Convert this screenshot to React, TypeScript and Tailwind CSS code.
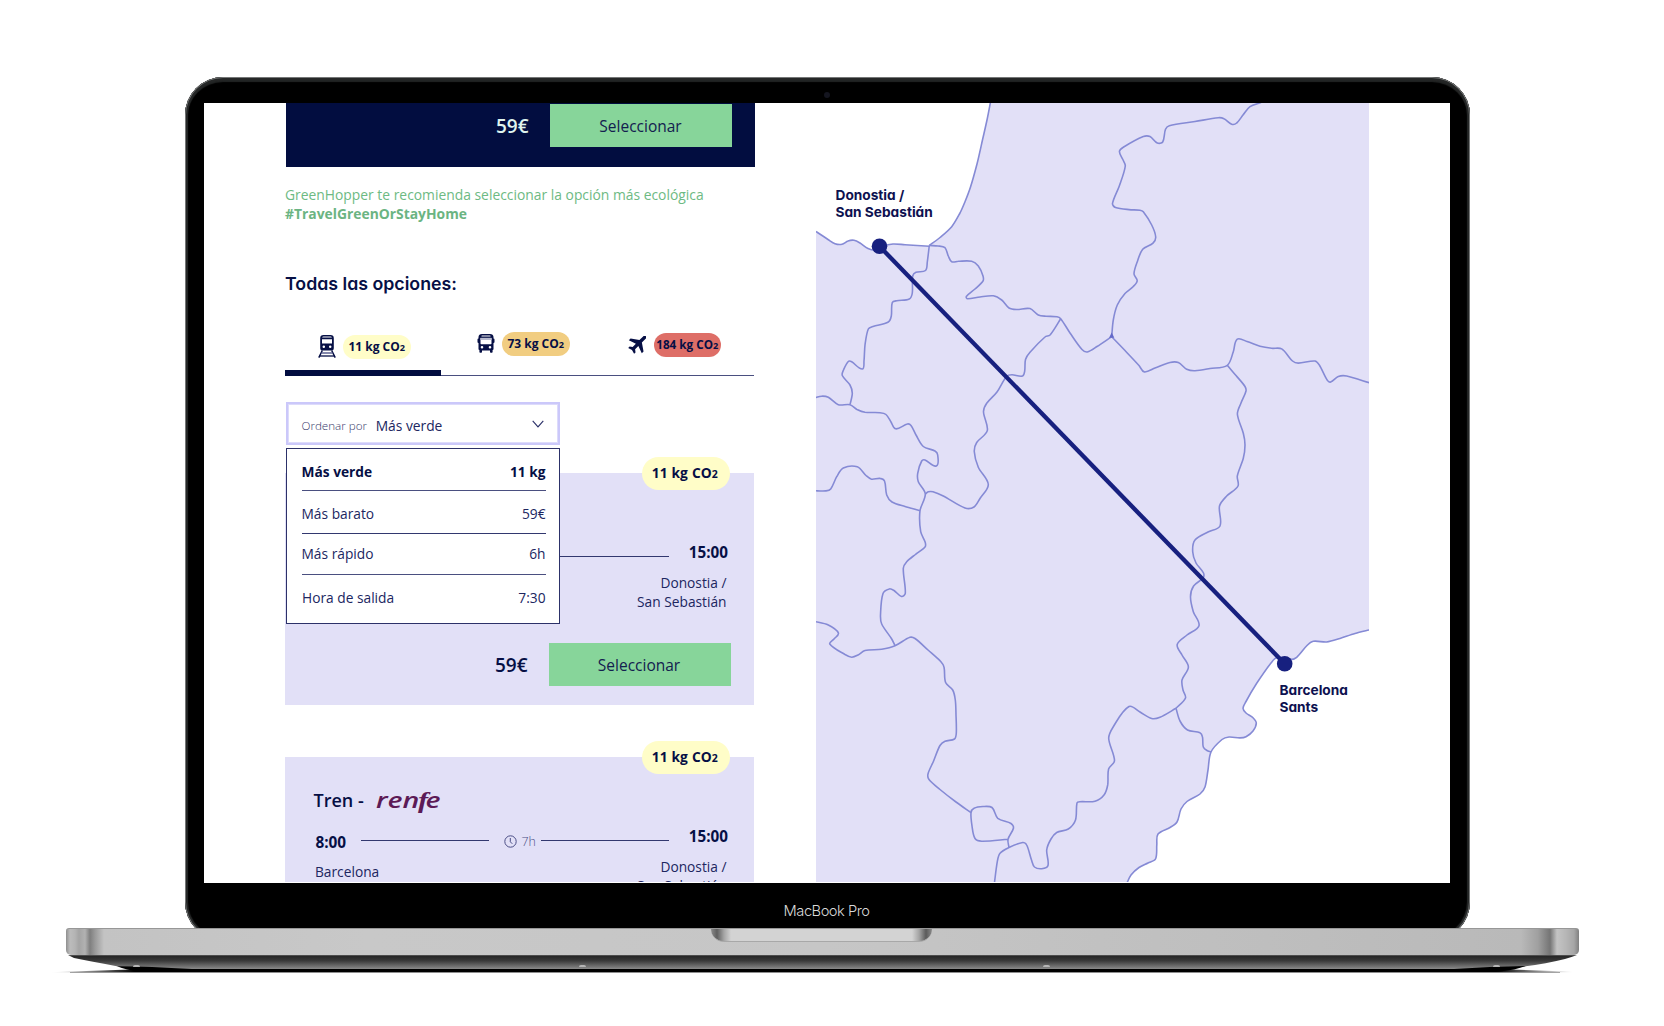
import type { ReactNode } from 'react';

type Point = [number, number];

/* ---------- Map geometry ---------- */

const coastNorth: Point[] = [
  [816, 231.5], [828, 239.5], [835, 243.7], [842, 244.3], [848, 241], [854, 240.3], [860, 243], [868, 248.5],
  [876, 250], [883, 246], [893, 244], [905, 244.7], [929.3, 246.2],
];
const coastBay: Point[] = [
  [929.3, 245.5], [940, 237.5], [951.7, 226.7], [960, 213], [965, 201.7], [970.5, 187], [977, 164], [982.7, 139], [987, 120], [990.7, 101],
];
const coastEast: Point[] = [
  [1372, 629.3], [1355, 633.5], [1340, 638.5], [1326.7, 642], [1313.3, 641.3], [1307, 645.5], [1296.7, 657.3], [1290, 659.6],
  [1277, 657.5], [1271, 663], [1256.7, 683.3], [1246, 701.5], [1243, 708.3], [1246, 713], [1253, 717.7], [1256.3, 723],
  [1253, 731], [1246, 736.7], [1240, 737.9], [1229, 737], [1222, 739.5], [1211, 752], [1208, 770], [1205, 787], [1200, 794],
  [1187, 801.5], [1181, 809], [1177, 822], [1170, 827.5], [1158, 834], [1156.8, 845], [1155.5, 859], [1148, 863], [1139, 867.5],
  [1131, 875], [1126.5, 884],
];

const borders: Point[][] = [
  [[929.3, 245.5], [938, 246], [945, 247.7], [948.3, 256], [951.7, 261.8], [958.3, 261.3], [971.7, 261.3], [978.3, 266], [983, 276], [983, 281], [975, 289], [966.3, 296.5], [967.5, 298.8], [980, 297], [993.3, 295.8], [1001.7, 300], [1009, 308], [1016.7, 309.5], [1030, 308.6], [1038.3, 315], [1046, 316.2], [1057, 316.7], [1060.7, 318.7], [1070, 333], [1082, 349.5], [1087.3, 352], [1097, 346.5], [1111.7, 336.7]],
  [[1111.7, 336.7], [1113.3, 320], [1117.3, 305], [1125, 293.5], [1133.3, 286.5], [1137.2, 280.7], [1134, 274], [1137.3, 261.7], [1142.7, 249.3], [1153, 243.2], [1155.7, 237], [1151.7, 225], [1143.3, 211.7], [1140, 210.2], [1129, 209.6], [1115.5, 207.5], [1112.5, 203.5], [1119.3, 186], [1125.3, 166], [1122.7, 159.3], [1119.4, 151.5], [1123.3, 147.3], [1143.3, 136.6], [1150, 136.6], [1157.3, 143], [1162.7, 142], [1165.5, 129.3], [1169.3, 125.7], [1195, 121.5], [1218.3, 117.7], [1224, 118.7], [1231.7, 124.2], [1236.7, 123], [1243, 115], [1250, 106.7], [1261, 102.5]],
  [[1111.7, 336.7], [1125, 350.5], [1139, 365.5], [1144.3, 371.9], [1155, 368], [1170, 362.5], [1178.3, 362.5], [1186.7, 369.3], [1195, 370.8], [1210, 368.5], [1227.3, 365.3], [1233.3, 351.7], [1237.3, 339.2], [1247, 341.5], [1260, 346.3], [1271.7, 348.3], [1281.7, 348.9], [1292.5, 361], [1298.3, 363.1], [1315, 361], [1319.3, 365], [1327.3, 380.2], [1330.7, 382], [1338.3, 376.5], [1346.7, 376], [1370, 383]],
  [[1227.3, 365.3], [1236, 375.5], [1245, 386.5], [1246, 391], [1241, 403], [1237.4, 414.3], [1243.3, 433.3], [1245, 445], [1243.3, 458.3], [1237.3, 476], [1238, 486], [1226.7, 496], [1219.5, 506], [1220, 526], [1208, 532], [1195, 540], [1192.7, 551.7], [1196, 563], [1203.5, 573], [1203, 578], [1193.6, 586], [1190.5, 596.7], [1193.3, 611.7], [1199, 625.8], [1187, 635], [1177.2, 644.5], [1182, 655], [1188.4, 667], [1182, 680], [1183, 690], [1185.5, 698], [1176, 708.3]],
  [[1176, 708.3], [1160, 717.2], [1151.7, 718.5], [1140, 712], [1129, 706.5], [1113.3, 726.7], [1108.7, 738.3], [1114.5, 760.7], [1108.6, 769], [1107.7, 785], [1104, 795], [1095, 801.2], [1080, 801.7], [1077, 802.8], [1075.5, 820], [1068.3, 829], [1056.7, 832.5], [1051, 839], [1046.7, 850], [1048, 865.5], [1041.7, 868.7], [1034.5, 867], [1031.5, 860], [1026.7, 845], [1022.7, 842.5], [1009, 847.5], [1000, 853.3], [997.3, 861.7], [994.3, 884]],
  [[1009, 847.5], [1008, 839.3], [1013.5, 828], [1011, 823.5], [997.8, 818.3], [992, 807.5], [983, 806.5], [974, 808.3], [971, 812.7], [972, 826], [975, 838.5], [981.7, 841.2], [1008, 839.3]],
  [[971, 812.7], [956, 802], [940, 789.5], [929, 779.5], [928, 774], [933.3, 761.7], [940, 745.5], [945, 741.3], [954.5, 739], [956.3, 733], [956, 715], [955.3, 700], [952.7, 690], [945.6, 682.5], [944, 667], [940.7, 661.5], [928, 650], [915, 638.5], [910, 637.3], [895, 645.7], [881.7, 649.2], [865, 650.5], [858, 655], [851.7, 657.2], [845, 654.5], [829.8, 644], [834, 639], [838.4, 633], [828.3, 625], [814, 621.3]],
  [[895, 645.7], [891.7, 639], [881.7, 624], [880.5, 615], [883, 593.5], [889.3, 588.9], [894, 590.5], [901.5, 596.5], [905.3, 593.3], [903.3, 568.3], [906.7, 561.7], [916, 554], [925, 547], [925.2, 542.3], [920.7, 531.7], [920, 510.7], [925.3, 494], [918.3, 481.7], [917.7, 473.3], [921.7, 461], [925, 460], [936.3, 466], [937.7, 455], [935, 451], [923.3, 446.5], [916, 435], [911, 425.5], [907.3, 424], [895.7, 428.8], [891, 422], [886, 414.5], [880, 412.7], [865, 412.3], [857, 409.5], [850, 404.7], [838.3, 404.7], [828.3, 397.3], [821.7, 396.2], [814, 398]],
  [[850, 404.7], [852.3, 393.3], [850, 385], [842.3, 375.5], [843.5, 370], [848.3, 361.5], [851.7, 361.8], [862.3, 369], [864, 361], [865, 345], [868.3, 329], [873, 326.5], [888.3, 322], [891.3, 316], [892.3, 302.5], [896.7, 300.7], [909.3, 299], [912.3, 293], [912.7, 276], [916, 272.3], [925.5, 270.5], [927.3, 262], [929.3, 245.5]],
  [[920, 510.7], [905, 506.5], [892, 502], [886.7, 495], [884.5, 481], [880, 478.4], [871.5, 479.2], [866, 475.5], [857.3, 466.8], [843.3, 468], [836.7, 476.7], [830.7, 488.9], [826, 490.9], [814, 490.7]],
  [[925.3, 494], [928.3, 491.8], [933, 491.8], [943.3, 496], [965, 508], [974, 507], [980, 498.5], [988.3, 484.5], [978.3, 467.3], [974.3, 451.7], [976.7, 442.5], [987.3, 430.7], [983.5, 411.7], [986.7, 403.3], [997, 392], [1006.7, 376.2], [1012, 374.8], [1022.5, 376], [1024.7, 371], [1025.5, 359.5], [1030, 352.3], [1045, 337], [1050, 335], [1060.7, 318.7]],
  [[1176, 708.3], [1180, 721], [1187.5, 730], [1200, 732.7], [1202.5, 737], [1203.3, 747], [1207, 750.5], [1211, 752]],
];

/** Smooth curve through every point (Catmull-Rom converted to cubic Béziers). */
function curve(points: Point[]): string {
  const k = 0.15;
  let d = '';
  for (let i = 0; i < points.length - 1; i++) {
    const p0 = points[i - 1] ?? points[i];
    const p1 = points[i];
    const p2 = points[i + 1];
    const p3 = points[i + 2] ?? p2;
    const seg = Math.hypot(p2[0] - p1[0], p2[1] - p1[1]);
    const a = Math.hypot(p2[0] - p0[0], p2[1] - p0[1]) || 1;
    const b = Math.hypot(p3[0] - p1[0], p3[1] - p1[1]) || 1;
    const s = seg * k * 2;
    const c1 = [p1[0] + ((p2[0] - p0[0]) / a) * s, p1[1] + ((p2[1] - p0[1]) / a) * s];
    const c2 = [p2[0] - ((p3[0] - p1[0]) / b) * s, p2[1] - ((p3[1] - p1[1]) / b) * s];
    d += `C${c1[0].toFixed(1)} ${c1[1].toFixed(1)} ${c2[0].toFixed(1)} ${c2[1].toFixed(1)} ${p2[0]} ${p2[1]}`;
  }
  return d;
}

const line = (points: Point[]) => `M${points[0][0]} ${points[0][1]}${curve(points)}`;

function RouteMap() {
  return (
    <div className="relative ml-[61px] h-[779px] w-[552.5px] shrink-0 overflow-hidden">
      <svg viewBox="816 103 552.5 779" className="block h-full w-full" fill="none">
        <rect x="816" y="103" width="553" height="780" fill="#e2e0f7" />
        <path d={`${line(coastNorth)}${curve(coastBay)}H816Z`} fill="#fff" />
        <path d={`${line(coastEast)}H1380V629Z`} fill="#fff" />
        <g stroke="#858ad5" strokeWidth="1.600" strokeLinejoin="round">
          {[coastNorth, coastBay, coastEast, ...borders].map((b, i) => (
            <path key={i} d={line(b)} />
          ))}
        </g>
        <path d="M1111.700 332.500l2.600 5.300h-5.200z" fill="#6469c9" />
        <g fill="#17207f">
          <path d="M879.500 246.300L1284.700 663.700" stroke="#17207f" strokeWidth="4.300" />
          <circle cx="879.500" cy="246.300" r="7.800" />
          <circle cx="1284.700" cy="663.700" r="7.800" />
        </g>
      </svg>
      <MapLabel className="left-[19.500px] top-[84px]">
        Donostia /<br />San Sebastián
      </MapLabel>
      <MapLabel className="left-[463.500px] top-[579px]">
        Barcelona<br />Sants
      </MapLabel>
    </div>
  );
}

function MapLabel({ className, children }: { className: string; children: ReactNode }) {
  return (
    <p
      className={`absolute whitespace-nowrap font-['Inter',sans-serif] text-[13.700px] leading-[17.400px] font-bold text-[#0d1150] [font-feature-settings:'cv11'] ${className}`}
    >
      {children}
    </p>
  );
}

/* ---------- Icons ---------- */

function TrainIcon() {
  return (
    <svg viewBox="0 0 18 23" className="mt-[8px] h-[23px] w-[18px] shrink-0">
      <path
        fill="#060f45"
        fillRule="evenodd"
        d="M5.500 0h7q3.300 0 3.300 3.300V13q0 2.600-2.600 2.600H4.800Q2.200 15.600 2.200 13V3.300Q2.200 0 5.500 0zM5.600 1.600q-1.200 0-1.500 1h9.800q-.3-1-1.500-1zM4 4.200v4.400h10V4.200zM5.800 10.600a1.250 1.250 0 100 2.500 1.250 1.250 0 000-2.500zM12.200 10.600a1.250 1.250 0 100 2.500 1.250 1.250 0 000-2.500z"
      />
      <path stroke="#060f45" strokeWidth="1.500" fill="none" d="M4.300 15.500L.8 22.600M13.700 15.500l3.500 7.100" />
      <path stroke="#5d6290" strokeWidth="1.500" fill="none" d="M3.500 18h11" />
      <path stroke="#060f45" strokeWidth="1.300" fill="none" d="M1.500 21h15" />
    </svg>
  );
}

function BusIcon() {
  return (
    <svg viewBox="0 0 18 19" className="mt-[7px] h-[19px] w-[18px] shrink-0">
      <path
        fill="#060f45"
        fillRule="evenodd"
        d="M5 0h8q3.300.2 3.500 3v1.500q1 .1 1 1V8q0 .9-1 1v6q0 .9-.9 1v2q0 .8-.8.800h-1q-.8 0-.8-.800v-1.500H5V18q0 .8-.8.800h-1q-.8 0-.8-.800v-2q-.9-.1-.9-1V9q-1-.1-1-1V5.500q0-.9 1-1V3Q1.700.2 5 0zM5 1.400q-.6 0-.6.500t.6.500h8q.6 0 .6-.5t-.6-.5zM3.500 4v5.600q0 .6.600.600h9.800q.6 0 .6-.6V4zM5 12a1.300 1.300 0 100 2.600 1.300 1.300 0 000-2.600zM13 12a1.300 1.300 0 100 2.600 1.300 1.300 0 000-2.600z"
      />
      <path d="M3.500 3.800h11v2.200h-11z" fill="#b9bbd0" />
    </svg>
  );
}

function PlaneIcon() {
  return (
    <svg viewBox="0 0 18 18" className="mt-[8.500px] h-[18px] w-[18px] shrink-0">
      <path
        fill="#060f45"
        transform="translate(10.200 7.800) rotate(45) scale(1.020) translate(-11.500 -12.200)"
        d="M20.500 16.200v-2.400L13.200 8.800V3.300c0-1-.75-1.700-1.700-1.700s-1.700.7-1.700 1.700v5.500l-7.300 5v2.400l7.300-2.500v4.500l-2.400 1.800v2l4.100-1.200 4.100 1.200v-2l-2.400-1.800v-4.500l7.300 2.500z"
      />
    </svg>
  );
}

/* ---------- Small pieces ---------- */

function TabPill({ className, amount }: { className: string; amount: string }) {
  return (
    <span className={`flex h-[24px] w-[67.500px] shrink-0 items-center justify-center rounded-full font-bold whitespace-nowrap ${className}`}>
      <span>
        {amount} kg CO<span className="text-[9.200px]">2</span>
      </span>
    </span>
  );
}

function SelectButton() {
  return (
    <button className="h-[43px] w-[182px] bg-[#87d59a] pr-px text-[15.500px] leading-[20px] text-[#13204f]">Seleccionar</button>
  );
}

function Clock() {
  return (
    <svg viewBox="0 0 13 13" className="mt-[2px] ml-[15px] h-[13px] w-[13px] shrink-0" fill="none" stroke="#4a4d85" strokeWidth="1">
      <circle cx="6.500" cy="6.500" r="5.700" />
      <path d="M6.300 3v3.800l2 2" />
    </svg>
  );
}

function RenfeLogo() {
  return (
    <span className="ml-[12px] flex h-[24px] w-[66px] items-center text-[#5c1a56]">
      <span className="origin-left scale-x-[1.320] text-[21.500px] leading-[24px] font-semibold italic whitespace-nowrap">
        ren<span className="mr-[-2px] ml-[-1px] font-['Liberation_Serif',serif] text-[23px] font-bold">f</span>e
      </span>
    </span>
  );
}

/** A trip; `compact` leaves out the departure side, which the open sort menu takes up. */
function TripCard({ className, compact = false }: { className: string; compact?: boolean }) {
  return (
    <article className={`relative h-[232px] w-[469px] shrink-0 bg-[#e2e0f7] pt-[31px] ${className}`}>
      <span className="absolute top-[-16px] right-[24px] flex h-[33px] w-[88.500px] items-center justify-center rounded-full bg-[#fffdc8] pr-[2px] text-[13.780px] font-bold whitespace-nowrap [word-spacing:0.5px]">
        <span>
          11 kg CO<span className="text-[10.500px]">2</span>
        </span>
      </span>
      <header className="flex h-[24px] items-center pl-[28.500px]">
        {!compact && (
          <>
            <h3 className="text-[18px] leading-[24px] font-semibold">Tren -</h3>
            <RenfeLogo />
          </>
        )}
      </header>
      <div className="mt-[12px] flex h-[30px] items-start justify-end pr-[26px]">
        {!compact && <time className="mt-[6px] w-[46px] text-[15.350px] leading-[24px] font-bold">8:00</time>}
        <div className="flex h-[33px] items-center">
          {!compact && (
            <>
              <span className="h-px w-[128px] bg-[#32386f]" />
              <Clock />
              <span className="mt-[2px] mr-[5px] ml-[4px] text-[12.400px] leading-[20px] font-light text-[#4a4d85]">7h</span>
            </>
          )}
          <span className="h-px w-[128px] bg-[#32386f]" />
        </div>
        <time className="ml-[20px] text-[15.250px] leading-[24px] font-bold">15:00</time>
      </div>
      <div className="mt-[3px] flex h-[38px] justify-between pr-[27.500px] pl-[30px] text-[13.740px] leading-[19px] text-[#20265f]">
        <p className="pt-[5px]">{!compact && 'Barcelona'}</p>
        <p className="text-right">
          Donostia /<br />San Sebastián
        </p>
      </div>
      <footer className="mt-[32px] flex items-center justify-end pr-[23.500px]">
        <span className="mr-[21px] text-[19px] leading-[24px] font-semibold">59€</span>
        <SelectButton />
      </footer>
    </article>
  );
}

function SortSelect() {
  return (
    <div className="relative z-10 mt-[26px] ml-px h-[43px] w-[274px]">
      <div className="flex h-full items-center border-[2.500px] border-[#cbc8fa] bg-white pt-[4px] pr-[14px] pl-[13.500px] outline outline-[#dddbfb] -outline-offset-3">
        <span className="text-[11.650px] leading-[18px] font-light text-[#34376a]">Ordenar por</span>
        <span className="ml-[8.500px] text-[13.800px] leading-[18px] text-[#20265f]">Más verde</span>
        <svg viewBox="0 0 12 8" className="-mt-[4px] ml-auto h-[8px] w-[12px]" fill="none" stroke="#2a2f68" strokeWidth="1.100">
          <path d="M.7 .8L6 6.900 11.300 .8" />
        </svg>
      </div>
      <ul className="absolute top-[46px] left-0 h-[176px] w-[274px] border border-[#2c3169] bg-white pr-[13.500px] pl-[15px] text-[13.750px] leading-[20px] text-[#20265f]">
        <li className="flex h-[42px] items-center justify-between border-b border-[#4a4f80] pt-[5px] font-bold text-[#060f45]">
          <span className="-ml-[0.500px]">Más verde</span>
          <span>11 kg</span>
        </li>
        <li className="flex h-[43px] items-center justify-between border-b border-[#32386f] pt-[4px]">
          <span className="-ml-[0.500px]">Más barato</span>
          <span>59€</span>
        </li>
        <li className="flex h-[41px] items-center justify-between border-b border-[#4a4f80]">
          <span className="-ml-[0.500px]">Más rápido</span>
          <span>6h</span>
        </li>
        <li className="flex h-[48px] items-center justify-between pb-[2px]">
          <span>Hora de salida</span>
          <span>7:30</span>
        </li>
      </ul>
    </div>
  );
}

function Results() {
  return (
    <section className="ml-[81px] flex w-[470px] shrink-0 flex-col text-[#060f45]">
      <div className="ml-px flex h-[64px] shrink-0 items-start justify-end bg-[#020d40] pt-px pr-[23px]">
        <span className="mr-[21.500px] text-[19px] leading-[44px] font-semibold text-[#dff3ee]">59€</span>
        <SelectButton />
      </div>
      <p className="mt-[18px] text-[13.870px] leading-[19px] whitespace-nowrap text-[#6dba83]">
        GreenHopper te recomienda seleccionar la opción más ecológica
        <br />
        <b className="font-bold text-[#6bb482]">#TravelGreenOrStayHome</b>
      </p>
      <h2 className="mt-[48px] pt-px font-['Inter',sans-serif] text-[17.750px] leading-[23px] font-semibold [font-feature-settings:'cv11']">
        Todas las opciones:
      </h2>
      <nav className="mt-[32px] flex h-[49px] w-[469px] shrink-0 items-start border-b border-[#4a4f80]">
        <div className="flex h-[49px] w-[156px] shrink-0 items-start gap-[7.500px] border-b-[6px] border-[#020d40] pl-[32.500px]">
          <TrainIcon />
          <TabPill className="mt-[8px] bg-[#fffdc8] text-[12.030px]" amount="11" />
        </div>
        <div className="ml-[35.500px] flex items-start gap-[7.500px]">
          <BusIcon />
          <TabPill className="mt-[5px] bg-[#f1cd81] text-[12.030px]" amount="73" />
        </div>
        <div className="ml-[58px] flex items-start gap-[8px]">
          <PlaneIcon />
          <TabPill className="mt-[6px] bg-[#de6e67] text-[11.700px]" amount="184" />
        </div>
      </nav>
      <SortSelect />
      <TripCard className="mt-[28px]" compact />
      <TripCard className="mt-[52px]" />
    </section>
  );
}

/* ---------- Laptop ---------- */

function Foot({ className }: { className: string }) {
  return <span className={`absolute top-[9.500px] h-[2px] w-[7px] rounded-t-full bg-[#b5b5b5] ${className}`} />;
}

function LaptopBase() {
  return (
    <>
      <div className="ml-[66px] flex h-[27px] w-[1513px] justify-center rounded-t-[3px] rounded-b-[5px] border-t border-[#979797] bg-[linear-gradient(90deg,#8f8f8f_0,#bcbcbc_4px,#b4b4b4_9px,#a4a4a4_13px,#b2b2b2_19px,#7f7f7f_24px,#9a9a9a_29px,#c3c3c3_38px,#c8c8c8_300px,#c6c6c6_760px,#bebebe_1200px,#b9b9b9_1455px,#a0a0a0_1472px,#757575_1484px,#c4c4c4_1491px,#b6b6b6_1500px,#a6a6a6_1508px,#808080_1513px)] pr-[2px]">
        <div className="h-[12.500px] w-[221px] rounded-b-[18px] border-b border-[#a8a8a8] bg-[linear-gradient(90deg,#8a8a8a_0,#5f5f5f_6px,#a5a5a5_13px,#d3d3d3_20px,#d3d3d3_201px,#a5a5a5_208px,#5a5a5a_215px,#8a8a8a_221px)]" />
      </div>
      <div className="relative ml-[46px] h-[20px] w-[1546px]">
        <svg viewBox="46 955 1546 20" className="block h-full w-full">
          <defs>
            <linearGradient id="under" x1="0" y1="0" x2="0" y2="1">
              <stop offset="0" stopColor="#6a6a6a" />
              <stop offset="0.080" stopColor="#262626" />
              <stop offset="0.400" stopColor="#3a3a3a" />
              <stop offset="1" stopColor="#8f8f8f" />
            </linearGradient>
            <linearGradient id="shade" x1="0" y1="0" x2="1" y2="0">
              <stop offset="0" stopColor="#000" stopOpacity="0" />
              <stop offset="0.055" stopColor="#000" />
              <stop offset="0.940" stopColor="#000" />
              <stop offset="0.990" stopColor="#000" stopOpacity="0" />
            </linearGradient>
          </defs>
          <path d="M50 972.300L130 969.500H1512L1588 972.300z" fill="url(#shade)" />
          <path d="M68 955H1577Q1572 957 1565 959Q1545 964 1520 967L1508 969.500H134L118 966.500Q90 961 74 958z" fill="url(#under)" />
          <path d="M117 966.200Q150 966.500 192 969H1454Q1490 966.500 1526 966Q1515 970 1500 971.500H140Q126 970 117 966.200z" fill="#000" />
          <path d="M70 972.500H1560" stroke="#666" strokeWidth="0.800" strokeOpacity="0.700" />
        </svg>
        <Foot className="left-[87px]" />
        <Foot className="left-[533px]" />
        <Foot className="left-[997px]" />
        <Foot className="left-[1447px]" />
      </div>
    </>
  );
}

export default function App() {
  return (
    <main className="h-[1026px] w-[1664px] overflow-hidden bg-white pt-[77px] font-['Open_Sans',sans-serif]">
      <div className="ml-[185px] h-[851px] w-[1285px] overflow-hidden">
        <div className="relative h-[863px] rounded-[38px] bg-black px-[19px] pt-[26px] shadow-[inset_0_0_0_1px_#757777,inset_0_0_1px_3px_#262828,inset_0_3px_1px_2px_#222424]">
          <span className="absolute top-[15px] left-[639px] h-[6px] w-[6px] rounded-full bg-[#14151f]" />
          <div className="h-[780px] w-[1246px] bg-white">
            <div className="flex h-[779px] items-start overflow-hidden">
              <Results />
              <RouteMap />
            </div>
          </div>
          <p className="mt-[18px] pr-[2px] text-center font-['Inter',sans-serif] text-[14.700px] leading-[20px] font-light tracking-[-0.500px] text-[#d8d8d8]">
            MacBook Pro
          </p>
        </div>
      </div>
      <LaptopBase />
    </main>
  );
}
